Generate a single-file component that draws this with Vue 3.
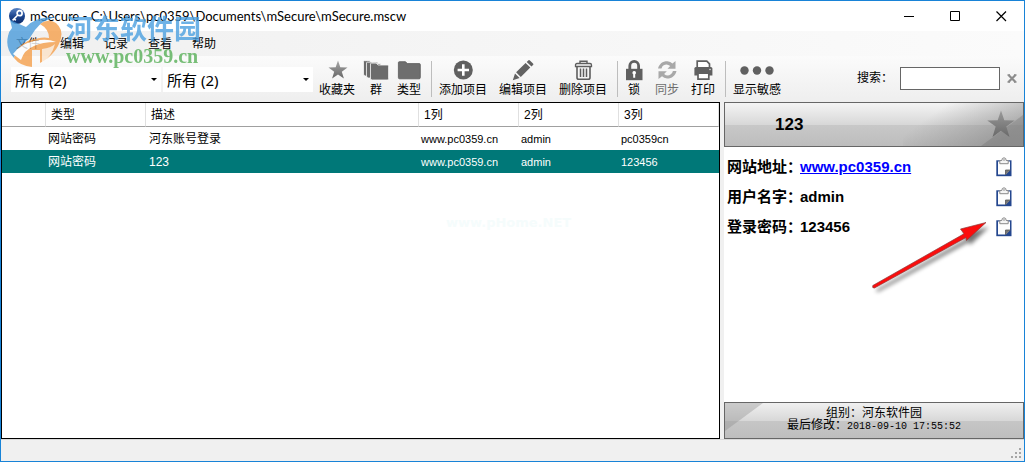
<script setup>
import { ref } from 'vue'

const menus = ['文件', '编辑', '记录', '查看', '帮助']
const columns = ['', '类型', '描述', '1列', '2列', '3列']
const rows = [
  { type: '网站密码', desc: '河东账号登录', a: 'www.pc0359.cn', b: 'admin', c: 'pc0359cn' },
  { type: '网站密码', desc: '123', a: 'www.pc0359.cn', b: 'admin', c: '123456' },
]
const selected = ref(1)
const search = ref('')
const fields = [
  { label: '网站地址：', value: 'www.pc0359.cn', link: true },
  { label: '用户名字：', value: 'admin' },
  { label: '登录密码：', value: '123456' },
]
const tools = [
  { id: 'star', label: '收藏夹', size: 'w48' },
  { id: 'group', label: '群', size: 'w30' },
  { id: 'folder', label: '类型', size: 'w36' },
  { sep: true, id: 's1' },
  { id: 'add', label: '添加项目', size: 'w60' },
  { id: 'edit', label: '编辑项目', size: 'w60' },
  { id: 'trash', label: '删除项目', size: 'w60' },
  { sep: true, id: 's2' },
  { id: 'lock', label: '锁', size: 'w30' },
  { id: 'sync', label: '同步', size: 'w36', off: true },
  { id: 'print', label: '打印', size: 'w36' },
  { sep: true, id: 's3' },
  { id: 'dots', label: '显示敏感', size: 'w60' },
]
</script>

<template>
  <div class="window">
    <header class="titlebar">
      <svg class="appicon" width="16" height="16" viewBox="0 0 16 16">
        <defs>
          <linearGradient id="appg" x1="0" y1="0" x2="0" y2="1">
            <stop offset="0" stop-color="#5b84c4" /><stop offset=".5" stop-color="#1d4690" /><stop offset="1" stop-color="#0b2a68" />
          </linearGradient>
        </defs>
        <circle cx="8" cy="8" r="8" fill="url(#appg)" />
        <circle cx="10.6" cy="5.2" r="2.5" fill="none" stroke="#fff" stroke-width="1.7" />
        <path d="M8.8 7 3.6 12.4M5.2 10.8l1.6 1.6" stroke="#fff" stroke-width="1.6" />
      </svg>
      <h1>mSecure - C:\Users\pc0359\Documents\mSecure\mSecure.mscw</h1>
      <div class="winbtns">
        <button aria-label="最小化"><svg width="11" height="11"><path d="M0 5.5h10" stroke="#000" /></svg></button>
        <button aria-label="最大化"><svg width="11" height="11"><path d="M.5.5h9v9h-9z" fill="none" stroke="#000" /></svg></button>
        <button aria-label="关闭"><svg width="11" height="11"><path d="M.5.5l9.5 9.5M10 .5.5 10" stroke="#000" stroke-width="1.2" /></svg></button>
      </div>
    </header>

    <nav class="menubar">
      <button v-for="m in menus" :key="m">{{ m }}</button>
    </nav>

    <div class="toolbar">
      <div class="combos">
        <div class="combo"><select aria-label="群"><option>所有 (2)</option></select></div>
        <div class="combo"><select aria-label="类型"><option>所有 (2)</option></select></div>
      </div>
      <template v-for="t in tools" :key="t.id">
        <span v-if="t.sep" class="sep"></span>
        <button v-else class="tool" :class="[t.size, { off: t.off }]" :disabled="t.off">
          <svg v-if="t.id === 'dots'" width="34" height="22"><g fill="#606060"><circle cx="4.500" cy="10.500" r="4.200" /><circle cx="17" cy="10.500" r="4.200" /><circle cx="29.500" cy="10.500" r="4.200" /></g></svg>
          <svg v-else width="26" height="22" viewBox="0 0 26 22">
            <defs>
              <linearGradient id="starg" x1="0" y1="0" x2="0" y2="1">
                <stop offset="0" stop-color="#a8a8a8" /><stop offset="1" stop-color="#666" />
              </linearGradient>
            </defs>
            <path v-if="t.id === 'star'" fill="url(#starg)" d="M14 .5l2.300 6.800 7.200.1-5.700 4.300 2.100 6.900L14 14.500l-5.900 4.100 2.100-6.900L4.500 7.400l7.200-.1z" />
            <g v-else-if="t.id === 'group'" fill="#6b6b6b" stroke="#f8f8f8" stroke-width=".8">
              <path d="M.5 1.500q0-.8.8-.8h5l1.500 1.500h7V16H2.500Q.5 16 .5 14z" />
              <path d="M3.500 3q0-.8.8-.8h5l1.500 1.500h7V18H5.500q-2 0-2-2z" />
              <path d="M7.500 4q0-.9.9-.9h4.800l1.800 1.900h9.400q1.200 0 1.200 1.200v12.500q0 1.300-1.300 1.300H9.200q-1.700 0-1.700-1.600z" />
            </g>
            <path v-else-if="t.id === 'folder'" fill="#6e6e6e" stroke="#5a5a5a" stroke-width=".8" d="M2.400 2.600q0-.9.900-.9h6.200l1.800 1.900h12q1 0 1 1v13q0 1.200-1.200 1.200H3.600q-1.200 0-1.200-1.200z" />
            <g v-else-if="t.id === 'add'">
              <circle cx="13.300" cy="10" r="9.500" fill="#606060" />
              <path d="M13.300 4.300v11.400M7.600 10H19" stroke="#fff" stroke-width="2.600" />
            </g>
            <path v-else-if="t.id === 'edit'" fill="#626262" d="M2.800 20.200 5 13.500l4.600 4.600zM6.100 12.300 15.600 2.900l4.700 4.600-9.500 9.500zM16.700 1.900l1.500-1.500q.8-.8 1.700 0l3.100 3.100q.8.800 0 1.600l-1.500 1.500z" />
            <g v-else-if="t.id === 'trash'" fill="none" stroke="#5e5e5e">
              <path d="M10 3.300V1.200h7v2.100" stroke-width="1.400" />
              <path d="M5.500 6.500V5q0-1.500 1.500-1.500h13q1.500 0 1.500 1.500v1.500z" stroke-width="1.300" />
              <path d="M7 7v10.500q0 1.800 1.800 1.800h9.400q1.800 0 1.800-1.800V7" stroke-width="1.600" />
              <path d="M10.500 8.500v8.500M13.500 8.500v8.500M16.500 8.500v8.500" stroke-width="1.500" />
            </g>
            <g v-else-if="t.id === 'lock'">
              <path d="M8.800 9.500V5.800a4.400 4.400 0 0 1 8.800 0v3.700" fill="none" stroke="#606060" stroke-width="2.800" />
              <path d="M5 8.800h16.500v11.400H5z" fill="#606060" />
              <path d="M13.200 11a1.800 1.800 0 0 1 1 3.300v3.500h-2v-3.500a1.800 1.800 0 0 1 1-3.300z" fill="#fff" />
            </g>
            <g v-else-if="t.id === 'sync'" fill="#a8a8a8">
              <path d="M4 8.500C5.200 3.500 9 1 13.500 1.200q3 .2 5 2.200L21.500 1v7.800h-8l2.700-2.700Q13 3.300 9.700 5.300 8 6.400 7.500 8.500z" />
              <path d="M22.500 11c-1.200 5-5 7.700-9.500 7.500q-3-.2-5-2.200L4.500 19v-7.800h8.300l-2.700 2.700q3.200 2.700 6.400.7 1.900-1.200 2.400-3.600z" />
            </g>
            <g v-else-if="t.id === 'print'">
              <path d="M7.200 7V1.200h9.600l2.700 2.700V7" fill="#fff" stroke="#606060" stroke-width="1.700" />
              <path d="M5.800 7h15q1.600 0 1.600 1.600v7h-18v-7Q4.400 7 5.800 7z" fill="#606060" />
              <path d="M8 13.200h10.800v6H8z" fill="#fff" stroke="#606060" stroke-width="1.700" />
              <circle cx="20" cy="9.500" r=".8" fill="#ddd" />
            </g>
          </svg>
          <span>{{ t.label }}</span>
        </button>
      </template>
      <form class="search" @submit.prevent>
        <label for="q">搜索：</label>
        <input id="q" v-model="search" type="text" />
        <button type="button" aria-label="清除" @click="search = ''">
          <svg width="10" height="9"><path d="M1.500 1l7 7M8.500 1l-7 7" stroke="#8c8c8c" stroke-width="2.200" /><path d="M.5 1h2.500M7 1h2.500M.5 8h2.500M7 8h2.500" stroke="#8c8c8c" stroke-width="1.400" /></svg>
        </button>
      </form>
    </div>

    <main>
      <section class="list">
        <table>
          <colgroup><col class="c0" /><col class="c1" /><col /><col class="c1" /><col class="c1" /><col class="c1" /></colgroup>
          <thead>
            <tr><th v-for="(c, i) in columns" :key="i">{{ c }}</th></tr>
          </thead>
          <tbody>
            <tr v-for="(r, i) in rows" :key="i" :class="{ sel: i === selected }" @click="selected = i">
              <td></td><td>{{ r.type }}</td><td>{{ r.desc }}</td><td>{{ r.a }}</td><td>{{ r.b }}</td><td>{{ r.c }}</td>
            </tr>
          </tbody>
        </table>
        <div class="faint">www.pHome.NET</div>
      </section>

      <aside class="detail">
        <div class="head">
          <svg class="sheen" viewBox="0 0 120 43" preserveAspectRatio="none">
            <defs>
              <linearGradient id="sh" x1="0" y1="0" x2="1" y2=".5"><stop offset=".3" stop-color="#777" stop-opacity="0" /><stop offset="1" stop-color="#777" stop-opacity=".5" /></linearGradient>
            </defs>
            <path d="M0 0h120v43H0z" fill="url(#sh)" /><path d="M120 12v31H78z" fill="#707070" opacity=".35" />
          </svg>
          <h2>123</h2>
          <svg class="bigstar" width="28" height="28" viewBox="0 0 28 28">
            <defs><linearGradient id="bs" x1="0" y1="0" x2="0" y2="1"><stop offset="0" stop-color="#9a9a9a" /><stop offset="1" stop-color="#696969" /></linearGradient></defs>
            <path fill="url(#bs)" d="M14 .5l3.300 9.800 10.400.1-8.400 6.200 3.200 10.400L14 20.800 5.500 27l3.200-10.400L.3 10.400l10.400-.1z" />
          </svg>
        </div>
        <dl>
          <div v-for="f in fields" :key="f.label" class="field">
            <dt>{{ f.label }}</dt>
            <dd><a v-if="f.link" href="#">{{ f.value }}</a><template v-else>{{ f.value }}</template></dd>
            <button aria-label="复制">
              <svg width="16" height="20" viewBox="0 0 16 20">
                <path d="M.3 3.300h15.200v15.900H.3z" fill="#24478f" />
                <path d="M2 4.500h12v8.500L9.800 17.500H2z" fill="#fdfdfd" />
                <path d="M9.500 18v-5h5z" fill="#777" /><path d="M9.500 18v-5h5" fill="none" stroke="#555" stroke-width=".8" />
                <path d="M3.800 6.700V3.500h2Q5.800.8 8 .8t2.200 2.700h2v3.200z" fill="#f4f4f4" stroke="#8b8b8b" stroke-width="1" />
                <circle cx="8" cy="3" r=".8" fill="#888" />
              </svg>
            </button>
          </div>
        </dl>
        <svg class="arrow" width="124" height="76" viewBox="0 0 124 76">
          <defs><filter id="blur" x="-20%" y="-20%" width="140%" height="150%"><feGaussianBlur stdDeviation="2" /></filter></defs>
          <g transform="translate(3 4)" fill="#000" opacity=".55" filter="url(#blur)"><path d="M3 66 94 14.500 90 9.500 116 3 97 21l-1-3.300L4.500 68z" /></g>
          <path d="M2.800 65.500 94 13.800 90.500 9 116 2.500 96.500 20.500 96 17.500 4.500 68q-2.500.5-1.700-2.500z" fill="#fb0d0d" stroke="#8d3b3b" stroke-width=".7" />
        </svg>
        <div class="foot">
          <svg class="glint" width="40" height="35"><path d="M0 0h38L0 28z" fill="#888" opacity=".35" /></svg>
          <div>组别：河东软件园</div>
          <div>最后修改：<time>2018-09-10 17:55:52</time></div>
        </div>
      </aside>
    </main>

    <footer class="status">
      <svg width="11" height="11"><g fill="#a6a6a6"><path d="M8 0h2v2H8zM8 4h2v2H8zM4 4h2v2H4zM8 8h2v2H8zM4 8h2v2H4zM0 8h2v2H0z" /></g></svg>
    </footer>

    <div class="mark">
      <svg width="60" height="58" viewBox="0 0 60 58">
        <path d="M4 8 20 15Q30 4 50 5 36 8 29 18l-6 9Q12 33 8 46-1 36 2 24q1-5 4-8z" fill="#4b9cdb" />
        <path d="M34 12Q42 6 50 11q7 6 5 15-4 16-21 25V38h-8v17Q14 54 8 46q2-12 14-17 14-5 21-3 0-9-9-14z" fill="#f5a04c" />
        <path d="M7 42Q14 32 28 29q13-3 22 1-14 0-22 4-10 4-13 14z" fill="#fff" />
        <path d="M36 37q9-1 13-5-3 12-13 19z" fill="#fff" opacity=".7" />
      </svg>
      <div class="marktext"><b>河东软件园</b><strong>www.pc0359.cn</strong></div>
    </div>
  </div>
</template>

<style>
body { margin: 0; }
</style>

<style scoped>
* { box-sizing: border-box; }
button { border: 0; padding: 0; background: none; font: inherit; color: inherit; }
.window { position: relative; display: flex; flex-direction: column; min-height: 100vh; border: 1px solid #1883d7; background: #f0f0f0; color: #000; font: 12px/16px "Liberation Sans", "Noto Sans CJK SC", sans-serif; }
.titlebar { display: flex; align-items: center; height: 30px; padding-left: 8px; background: #fff; }
h1 { flex: 1; margin: 0 0 0 5px; font: 13px/16px Lato, "Noto Sans CJK SC", sans-serif; }
.winbtns { display: flex; }
.winbtns button { width: 46px; height: 29px; display: grid; place-items: center; }
.menubar { display: flex; height: 25px; padding-left: 9px; background: linear-gradient(90deg, #f0f0f0, #fbfbfb); }
.menubar button { width: 44px; text-align: center; }
.menubar button:first-child { width: 36px; margin-right: 4px; }
.toolbar { display: flex; height: 46px; padding-left: 10px; background: linear-gradient(#fbfbfb, #eee); }
.combos { display: flex; gap: 2px; padding-top: 11px; }
.combo { position: relative; width: 150px; height: 25px; background: #fff; }
.combo::after { content: ""; position: absolute; right: 4px; top: 11px; border: 3px solid transparent; border-top-color: #000; border-bottom: 0; pointer-events: none; }
select { width: 100%; height: 25px; padding: 0 4px; border: 0; appearance: none; background: none; color: #000; font: 15px/20px "Noto Sans", "Noto Sans CJK SC", sans-serif; }
.tool { display: flex; flex-direction: column; align-items: center; padding-top: 4px; white-space: nowrap; }
.tool svg { display: block; flex: none; }
.tool span { line-height: 16px; }
.off { color: #6d6d6d; }
.w30 { width: 30px; }
.w36 { width: 36px; }
.w48 { width: 48px; }
.w60 { width: 60px; }
.sep { width: 1px; height: 36px; margin: 5px 1px 0 4px; background: #bdbdbd; }
.search { display: flex; align-items: flex-start; margin-left: auto; padding: 11px 7px 0 0; }
.search label { padding: 3px 7px 0 0; }
.search input { width: 100px; height: 23px; padding: 2px; border: 1px solid #666; background: #fff; }
.search button { margin-left: 6px; height: 23px; width: 11px; }
main { flex: 1; display: flex; gap: 4px; min-height: 337px; }
.list { position: relative; flex: 1; min-width: 0; border: 1px solid #000; background: #fff; }
table { width: 100%; table-layout: fixed; border-collapse: separate; border-spacing: 0; }
.c0 { width: 44px; }
.c1 { width: 100px; }
th { height: 24px; padding: 0 5px; border-right: 1px solid #e0e0e0; border-bottom: 1px solid #a0a0a0; text-align: left; font-weight: 400; line-height: 16px; }
td { height: 23px; padding: 0 2px; line-height: 16px; }
td:nth-child(3) { padding-left: 3px; }
td:nth-child(n + 4) { font-size: 11px; }
.sel { background: #007878; color: #fff; }
.faint { position: absolute; left: 444px; top: 112px; color: #f5fcfc; font: 700 13px/16px "DejaVu Sans", sans-serif; }
.detail { position: relative; display: flex; flex-direction: column; width: 300px; background: #fff; }
.head { position: relative; height: 45px; border: 1px solid #666; background: linear-gradient(#f4f4f4, #d8d8d8 50%, #c8c8c8 51%, #bdbdbd); }
.sheen { position: absolute; right: 0; top: 0; width: 120px; height: 43px; }
.bigstar { position: absolute; right: 8px; top: 7px; }
h2 { margin: 0; padding: 12px 0 0 50px; font-size: 17px; line-height: 20px; }
dl { flex: 1; margin: 0; padding-top: 5px; }
.field { display: flex; align-items: center; height: 30px; padding: 0 12px 0 3px; font-size: 15px; line-height: 20px; font-weight: 700; }
dt { width: 73px; white-space: nowrap; }
dd { flex: 1; margin: 0; }
a { color: #00f; }
.field button { height: 20px; }
.field svg { display: block; }
.arrow { position: absolute; right: 30px; top: 118px; pointer-events: none; }
.foot { position: relative; height: 37px; padding-top: 4px; border: 1px solid #666; background: linear-gradient(#f0f0f0, #d8d8d8 50%, #c6c6c6 51%, #bebebe); text-align: center; line-height: 12px; }
.glint { position: absolute; left: 0; top: 0; }
time { font: 10px/12px "Liberation Mono", monospace; }
.status { display: flex; justify-content: flex-end; align-items: flex-end; height: 22px; padding: 0 2px 2px 0; border-top: 1px solid #d9d9d9; }
.mark { position: absolute; left: 5px; top: 11px; display: flex; opacity: .8; pointer-events: none; }
.marktext { display: flex; flex-direction: column; color: #4ba0e0; }
b { font: 700 27px/32px "Noto Sans CJK SC", sans-serif; }
strong { color: #58b058; font: 700 20px/24px "Liberation Serif", serif; }
</style>
